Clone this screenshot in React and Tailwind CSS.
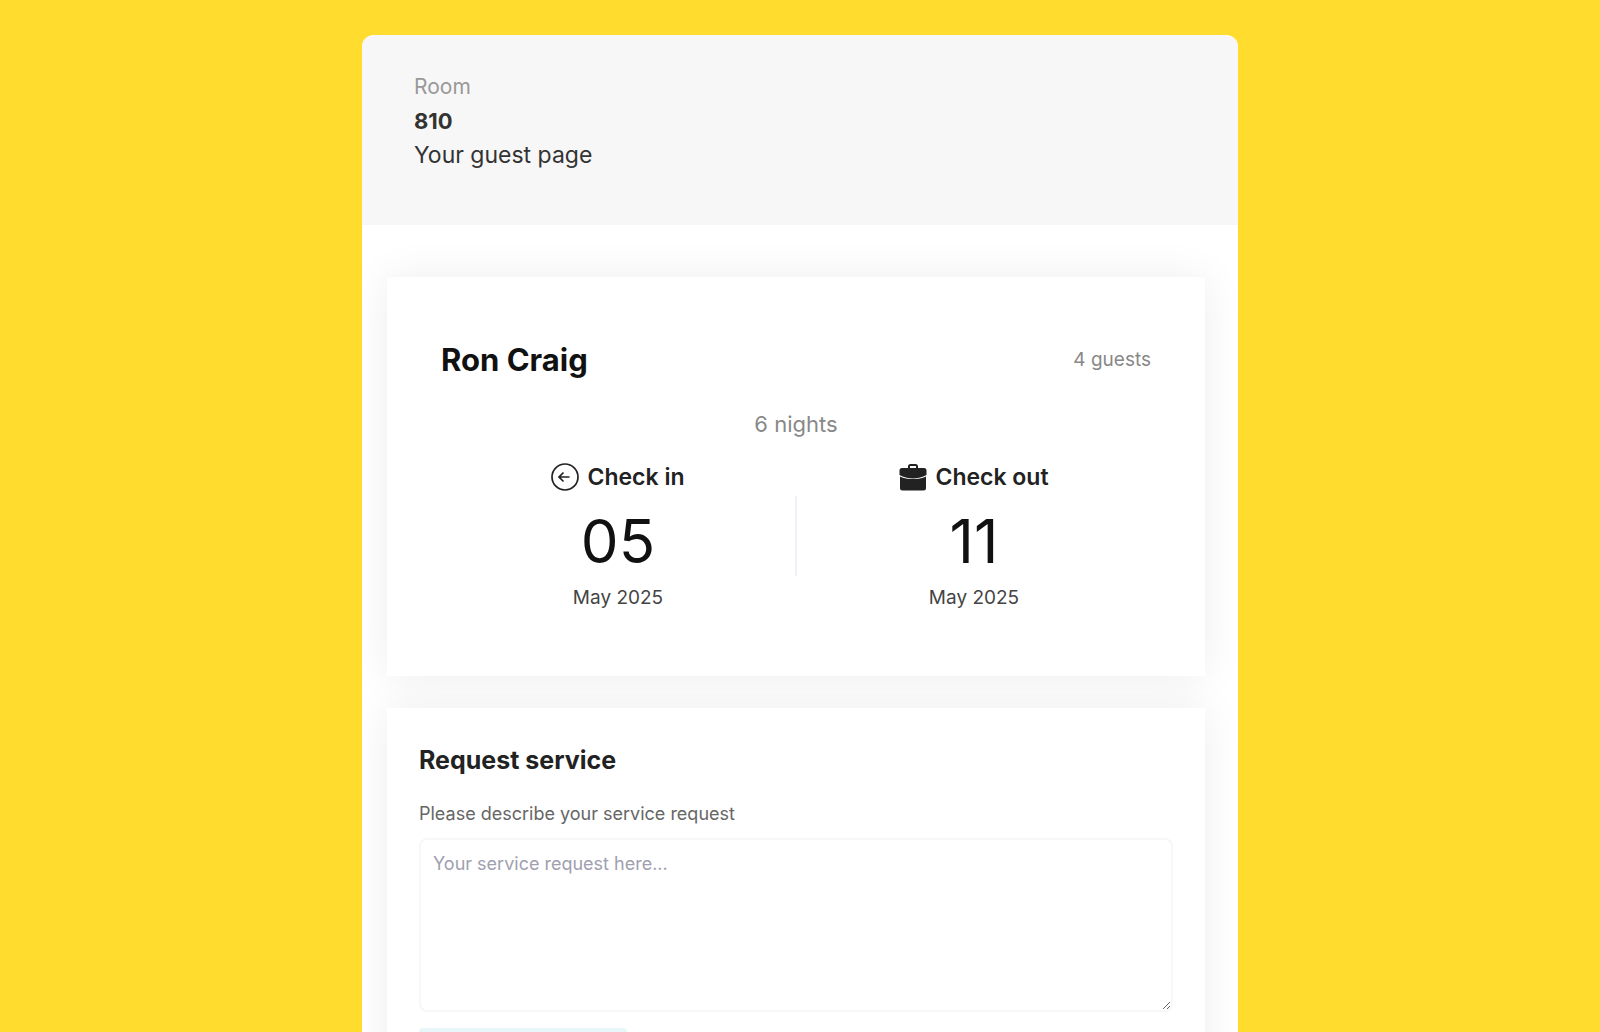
import React, { useState } from "react";

const booking = {
  room: "810",
  guest: "Ron Craig",
  guests: 4,
  nights: 6,
  checkIn: { day: "05", month: "May 2025" },
  checkOut: { day: "11", month: "May 2025" },
};

const CheckInIcon = () => (
  <svg
    viewBox="0 0 28 28"
    className="w-7 h-7"
    fill="none"
    stroke="currentColor"
    strokeWidth="1.7"
    aria-hidden="true"
  >
    <circle cx="14" cy="14" r="13" />
    <path d="M18.5 14H8.5M12.5 9.5L8 14l4.5 4.5" />
  </svg>
);

const CheckOutIcon = () => (
  <svg viewBox="0 0 28 28" className="w-7 h-7" fill="currentColor" aria-hidden="true">
    <path d="M9 5V3.5A2.5 2.5 0 0 1 11.5 1h5A2.5 2.5 0 0 1 19 3.5V5h6a2.500 2.500 0 0 1 2.500 2.500V12c-4 2.300-8.500 3.400-13.500 3.400S4.500 14.300.5 12V7.500A2.500 2.500 0 0 1 3 5h6zm2 0h6V3h-6v2z" />
    <path d="M1 13.400c3.800 1.800 8.200 2.700 13 2.700s9.200-.9 13-2.700V25a2.500 2.500 0 0 1-2.500 2.500h-21A2.500 2.500 0 0 1 1 25V13.400z" />
  </svg>
);

const StayDate = ({ icon, label, date }) => (
  <div className="flex-1 flex flex-col items-center">
    <div className="flex items-center gap-2 text-[#222]">
      {icon}
      <h3 className="text-[23px] leading-[34px] font-semibold">{label}</h3>
    </div>
    <p className="mt-3 text-[60px] leading-[70px] text-[#111]">{date.day}</p>
    <p className="mt-2 text-[19px] leading-7 text-[#444]">{date.month}</p>
  </div>
);

const App = () => {
  const [request, setRequest] = useState("");

  return (
    <div className="min-h-screen bg-[#ffdc2e] pt-[35px] font-['Inter',sans-serif]">
      <main className="max-w-[876px] mx-auto rounded-t-xl overflow-hidden bg-white">
        <header className="bg-[#f7f7f7] px-[52px] pt-[35px] pb-[53px]">
          <p className="text-[21px] leading-[34px] text-[#999]">Room</p>
          <p className="text-[22px] leading-[34px] font-bold text-[#333]">{booking.room}</p>
          <h1 className="text-[23px] leading-[34px] text-[#333]">Your guest page</h1>
        </header>

        <div className="flex flex-col gap-8 pt-[52px] pb-8 pl-[25px] pr-[33px]">
          <section className="bg-white px-[54px] pt-[63px] pb-16 shadow-[0_0_40px_rgba(0,0,0,0.07)]">
            <div className="flex items-center justify-between">
              <h2 className="text-[31px] leading-10 font-bold text-[#111]">{booking.guest}</h2>
              <p className="text-[19px] leading-7 text-[#888]">{booking.guests} guests</p>
            </div>
            <p className="mt-7 text-center text-[22px] leading-8 text-[#888]">
              {booking.nights} nights
            </p>
            <div className="mt-5 flex items-center">
              <StayDate icon={<CheckInIcon />} label="Check in" date={booking.checkIn} />
              <div className="w-0.5 h-20 bg-[#eef1f5]"></div>
              <StayDate icon={<CheckOutIcon />} label="Check out" date={booking.checkOut} />
            </div>
          </section>

          <section className="bg-white px-8 py-8 shadow-[0_0_40px_rgba(0,0,0,0.07)]">
            <h2 className="text-[25px] leading-10 font-bold text-[#222]">Request service</h2>
            <label htmlFor="request" className="mt-5 block text-[18px] leading-7 text-[#666]">
              Please describe your service request
            </label>
            <textarea
              id="request"
              value={request}
              onChange={(e) => setRequest(e.target.value)}
              placeholder="Your service request here..."
              className="mt-2.5 block w-full h-[174px] rounded-lg border-2 border-[#f6f7f9] px-3 py-2 text-[18px] leading-8 text-[#444] placeholder:text-[#a0a0b0] outline-none resize"
            />
            <button
              type="button"
              aria-label="Send request"
              className="mt-4 block w-[208px] h-14 rounded bg-[#e6f6f9]"
            />
          </section>
        </div>
      </main>
    </div>
  );
};

export default App;
